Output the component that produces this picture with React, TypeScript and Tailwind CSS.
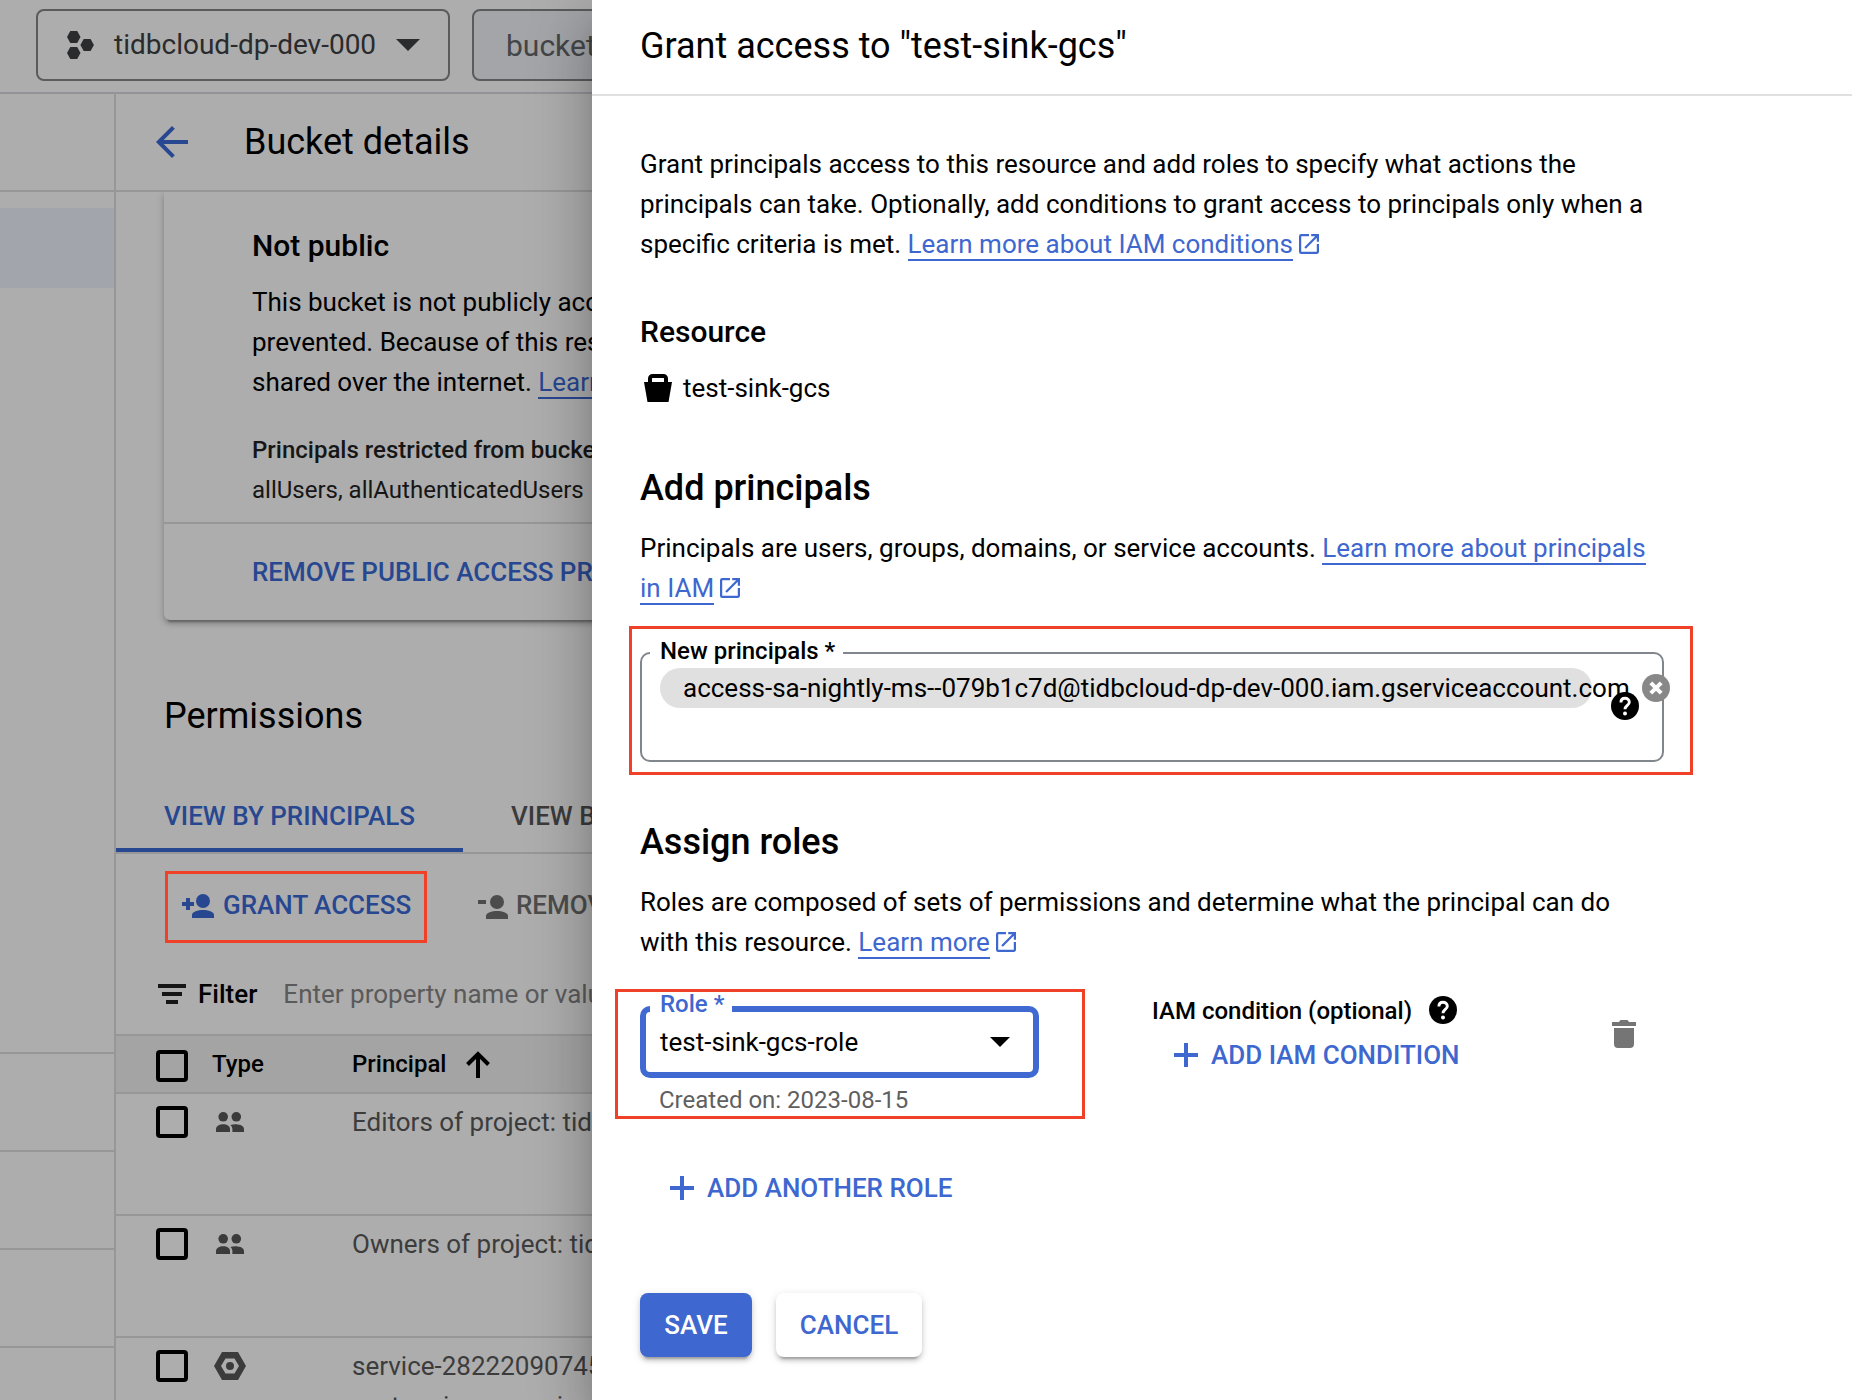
import type { ReactNode } from "react";

function ExternalIcon() {
  return (
    <svg viewBox="3 3 18 18" className="ml-[6px] inline-block size-5 align-[-1px]" fill="#3e67cf">
      <path d="M19 19H5V5h7V3H5a2 2 0 0 0-2 2v14a2 2 0 0 0 2 2h14c1.100 0 2-.9 2-2v-7h-2v7zM14 3v2h3.590l-9.830 9.830 1.410 1.410L19 6.410V10h2V3h-7z" />
    </svg>
  );
}

function DocLink({ children }: { children: ReactNode }) {
  return <span className="border-b-2 border-[#3e67cf] text-[#3e67cf]">{children}</span>;
}

function HelpIcon() {
  return (
    <svg viewBox="0 0 28 28" className="size-7 shrink-0">
      <circle cx="14" cy="14" r="14" fill="#000" />
      <path d="M9.900 10.600C9.900 7.800 11.600 6.200 14 6.200c2.400 0 4.300 1.600 4.300 4 0 3.200-4.300 3.400-4.300 7.100" fill="none" stroke="#fff" strokeWidth="2.900" />
      <circle cx="14" cy="21.600" r="2" fill="#fff" />
    </svg>
  );
}

function PlusIcon() {
  return (
    <svg viewBox="0 0 24 24" className="size-6 shrink-0">
      <path d="M12 0v24M0 12h24" stroke="#3e67cf" strokeWidth="4" />
    </svg>
  );
}

function PeopleIcon() {
  return (
    <svg viewBox="0 0 28 20" className="h-5 w-7" fill="#3b3b3b">
      <circle cx="7.200" cy="4.800" r="4.800" />
      <circle cx="20.300" cy="4.800" r="4.800" />
      <path d="M0 20v-2.800C0 14 3.500 12.300 7.200 12.300S14 14 14 17.200V20z" />
      <path d="M16.400 20v-2.800c0-1.900-.9-3.300-2-4.300 1.800-.5 3.800-.7 5.900-.6 3.900.2 7.700 1.700 7.700 4.900V20z" />
    </svg>
  );
}

function ServiceIcon() {
  return (
    <svg viewBox="0 0 32 28" className="h-7 w-8" fill="#3b3b3b">
      <path fillRule="evenodd" d="M8 0h16l8 14-8 14H8L0 14zM11.500 6.500 7 14l4.500 7.500h9L25 14l-4.500-7.500z" />
      <circle cx="16" cy="14" r="4" />
    </svg>
  );
}

function Checkbox() {
  return <span className="size-8 shrink-0 rounded-[4px] border-4 border-black" />;
}

function Hexagon({ x, y }: { x: number; y: number }) {
  return <path transform={`translate(${x} ${y})`} d="M3.300 0h6.900l3.300 6-3.300 6H3.300L0 6z" />;
}

function TopBar() {
  return (
    <div className="flex h-[94px] border-b-2 border-[#939398] pt-[9px] pl-9">
      <div className="flex h-[72px] w-[414px] shrink-0 items-center rounded-[8px] border-2 border-[#5a5b5d] pl-[29px] text-[#2a2b2d]">
        <svg viewBox="0 0 27 28" className="h-7 w-[27px]" fill="currentColor">
          <Hexagon x={0} y={0} />
          <Hexagon x={13.400} y={8} />
          <Hexagon x={0} y={16} />
        </svg>
        <span className="ml-5 text-[28px]">tidbcloud-dp-dev-000</span>
        <svg viewBox="0 0 24 12" className="ml-5 h-3 w-6" fill="currentColor">
          <path d="M0 0h24L12 12z" />
        </svg>
      </div>
      <div className="ml-[22px] flex h-[72px] w-[300px] shrink-0 items-center rounded-[8px] border-2 border-[#5a5b5d] bg-[#a3a5a8] pl-8 text-[30px] text-[#444548]">
        bucket
      </div>
    </div>
  );
}

function SideNav() {
  return (
    <div className="w-[116px] shrink-0 border-r-2 border-[#979797]">
      <div className="h-[98px] border-b-2 border-[#979797]" />
      <div className="mt-4 h-20 bg-[#a3a5ad]" />
      <div className="h-[766px] border-b-2 border-[#979797]" />
      <div className="h-[98px] border-b-2 border-[#979797]" />
      <div className="h-[98px] border-b-2 border-[#979797]" />
      <div className="h-[98px] border-b-2 border-[#979797]" />
    </div>
  );
}

const principals = [
  { kind: "people", lines: ["Editors of project: tidbcloud"] },
  { kind: "people", lines: ["Owners of project: tidbcloud"] },
  { kind: "service", lines: ["service-28222090745", "system.iam.gserviceaccount"] },
];

function BucketPage() {
  return (
    <div className="min-w-0 flex-1 overflow-hidden whitespace-nowrap">
      <div className="flex h-[98px] items-center border-b-2 border-[#979797] pl-10">
        <svg viewBox="4 4 16 16" className="size-8 shrink-0" fill="#284791">
          <path d="M20 11H7.830l5.590-5.590L12 4l-8 8 8 8 1.410-1.410L7.830 13H20v-2z" />
        </svg>
        <h1 className="ml-14 text-[36px]">Bucket details</h1>
      </div>

      <div className="overflow-hidden pb-[72px] pl-12">
        <div className="h-[428px] w-[700px] rounded-b-[6px] pt-[34px] shadow-[0_6px_2px_-4px_rgba(0,0,0,0.25),0_4px_4px_rgba(0,0,0,0.16),0_2px_10px_rgba(0,0,0,0.14)]">
          <div className="h-[296px] pl-[88px] text-[26px] leading-10">
            <h2 className="text-[30px] leading-10 font-medium">Not public</h2>
            <p className="mt-4">
              This bucket is not publicly accessible
              <br />
              prevented. Because of this restriction
              <br />
              shared over the internet.{" "}
              <span className="border-b-2 border-[#284791] text-[#284791]">Learn more</span>
            </p>
            <p className="mt-7 text-[24px] leading-10 text-[#161616]">
              <span className="font-medium">Principals restricted from bucket access</span>
              <br />
              allUsers, allAuthenticatedUsers
            </p>
          </div>
          <div className="border-t-2 border-[#979797] pt-7 pl-[88px] text-[26px] leading-10 font-medium text-[#284791]">
            REMOVE PUBLIC ACCESS PREVENTION
          </div>
        </div>
      </div>

      <h2 className="pl-12 text-[36px] leading-[48px]">Permissions</h2>

      <div className="mt-11 flex border-b-2 border-[#979797] pb-0.5 text-[26px] leading-10 font-medium">
        <div className="-mb-0.5 h-[68px] w-[347px] shrink-0 border-b-4 border-[#284791] pt-3 pl-12 text-[#284791]">
          VIEW BY PRINCIPALS
        </div>
        <div className="-mb-0.5 h-[68px] shrink-0 pt-3 pl-12 text-[#3b3b3b]">VIEW BY ROLES</div>
      </div>

      <div className="flex pt-[17px] pl-[49px] text-[26px] font-medium">
        <div className="flex h-[72px] w-[262px] shrink-0 items-center border-3 border-[#ee4128] pb-[3px] pl-[14px] text-[#284791]">
          <svg viewBox="0 0 32 24" className="h-6 w-8 shrink-0" fill="currentColor">
            <path d="M4 4h4v4h4v4H8v4H4v-4H0V8h4z" />
            <circle cx="21" cy="7" r="7" />
            <path d="M10 24v-3c0-3.200 6-5 11-5s11 1.800 11 5v3z" />
          </svg>
          <span className="ml-[9px]">GRANT ACCESS</span>
        </div>
        <div className="ml-[51px] flex h-[72px] shrink-0 items-center text-[#4c4c4c]">
          <svg viewBox="0 0 30 24" className="h-6 w-[30px] shrink-0" fill="currentColor">
            <path d="M0 5h8v4H0z" />
            <circle cx="19" cy="7" r="7" />
            <path d="M8 24v-3c0-3.200 6-5 11-5s11 1.800 11 5v3z" />
          </svg>
          <span className="ml-2 pb-[3px]">REMOVE ACCESS</span>
        </div>
      </div>

      <div className="flex h-[91px] items-center pl-[42px] text-[26px] leading-10">
        <svg viewBox="0 0 28 20" className="mt-[10px] h-5 w-7 shrink-0" fill="#161616">
          <path d="M0 0h28v4H0zM4 8h20v4H4zM8 16h12v4H8z" />
        </svg>
        <span className="mt-[11px] ml-3 font-medium">Filter</span>
        <span className="mt-[11px] ml-[26px] text-[#5a5a5a]">Enter property name or value</span>
      </div>

      <div className="flex h-[60px] items-center border-y-2 border-[#979797] bg-[#a4a4a4] pl-10 text-[24px] font-medium">
        <span className="flex w-14 shrink-0 pt-1">
          <Checkbox />
        </span>
        <span className="w-[140px] shrink-0">Type</span>
        <span>Principal</span>
        <svg viewBox="0 0 24 27" className="ml-5 h-[27px] w-6 shrink-0" fill="none" stroke="#000" strokeWidth="4">
          <path d="M12 27V3M1.500 13.500 12 3l10.500 10.500" />
        </svg>
      </div>

      {principals.map((p) => (
        <div key={p.lines[0]} className="flex h-[122px] border-b-2 border-[#979797] pt-2 pl-10 text-[26px] leading-10 text-[#3c3c3c]">
          <span className="flex w-[58px] shrink-0 pt-1">
            <Checkbox />
          </span>
          <span className="w-[138px] shrink-0">
            {p.kind === "people" ? (
              <span className="flex pt-[10px] pl-[2px]">
                <PeopleIcon />
              </span>
            ) : (
              <span className="flex pt-[6px]">
                <ServiceIcon />
              </span>
            )}
          </span>
          <span className="shrink-0">
            {p.lines.map((line) => (
              <span key={line} className="block">
                {line}
              </span>
            ))}
          </span>
        </div>
      ))}
    </div>
  );
}

function PrincipalsField() {
  return (
    <div className="relative mt-11 h-[110px] w-[1024px] rounded-[10px] border-2 border-[#80868b]">
      <div className="absolute -top-[28px] -left-[13px] h-[149px] w-[1064px] border-3 border-[#ee4128]" />
      <span className="absolute -top-[19px] left-2 h-8 w-[193px] bg-white pl-[10px] text-[24px] leading-8 font-medium">
        New principals *
      </span>
      <div className="mt-[14px] ml-[18px] flex h-10 w-[932px] items-center rounded-full bg-[#e0e0e0] pl-[23px] text-[26px] whitespace-nowrap">
        <span>access-sa-nightly-ms--079b1c7d@tidbcloud-dp-dev-000.iam.gserviceaccount.com</span>
      </div>
      <svg viewBox="0 0 28 28" className="absolute top-5 left-[1000px] size-7">
        <circle cx="14" cy="14" r="14" fill="#888" />
        <path d="m8.800 8.800 10.400 10.400M19.200 8.800 8.800 19.200" stroke="#fff" strokeWidth="4" />
      </svg>
      <span className="absolute top-[38px] left-[969px]">
        <HelpIcon />
      </span>
    </div>
  );
}

function RoleRow() {
  return (
    <div className="flex items-start pt-11">
      <div className="relative w-[399px]">
        <div className="absolute -top-[17px] -left-[25px] h-[130px] w-[470px] border-3 border-[#ee4128]" />
        <div className="relative flex h-[72px] items-center justify-between rounded-[10px] border-6 border-[#4069d1] pr-[23px] pl-[14px] text-[26px]">
          <span className="absolute -top-[14px] left-1 h-4 w-[82px] bg-white" />
          <span className="absolute -top-[24px] left-[14px] text-[24px] leading-8 font-medium text-[#3e67cf]">Role *</span>
          <span>test-sink-gcs-role</span>
          <svg viewBox="0 0 20 10" className="h-[10px] w-5">
            <path d="M0 0h20L10 10z" />
          </svg>
        </div>
        <p className="mt-[6px] pl-[19px] text-[24px] leading-8 text-[#5f5f5f]">Created on: 2023-08-15</p>
      </div>
      <div className="ml-[113px] -mt-[15px] w-[460px]">
        <div className="flex h-10 items-center">
          <span className="text-[24px] font-medium">IAM condition (optional)</span>
          <span className="mt-[-2px] ml-[17px]">
            <HelpIcon />
          </span>
        </div>
        <div className="mt-1 flex h-10 items-center pl-[22px] text-[26px] font-medium text-[#3e67cf]">
          <PlusIcon />
          <span className="ml-[13px]">ADD IAM CONDITION</span>
        </div>
      </div>
      <svg viewBox="0 0 24 28" className="mt-[14px] h-7 w-6" fill="#757575">
        <path d="M7 2 8.500 0h7L17 2h7v4H0V2zM2 8h20v16a4 4 0 0 1-4 4H6a4 4 0 0 1-4-4z" />
      </svg>
    </div>
  );
}

function GrantAccessDrawer() {
  return (
    <div className="absolute inset-y-0 right-0 w-[1260px] bg-white shadow-[0_16px_20px_-10px_rgba(0,0,0,0.2),0_32px_48px_4px_rgba(0,0,0,0.14),0_12px_60px_10px_rgba(0,0,0,0.12)]">
      <div className="flex h-24 items-center border-b-2 border-[#e0e0e0] pb-[2px] pl-12 text-[36px]">
        Grant access to "test-sink-gcs"
      </div>
      <div className="pt-12 pl-12 text-[26px] leading-10">
        <p>
          Grant principals access to this resource and add roles to specify what actions the
          <br />
          principals can take. Optionally, add conditions to grant access to principals only when a
          <br />
          specific criteria is met. <DocLink>Learn more about IAM conditions</DocLink>
          <ExternalIcon />
        </p>

        <h3 className="mt-12 text-[30px] leading-10 font-medium">Resource</h3>
        <div className="mt-4 flex h-10 items-center pl-1">
          <svg viewBox="0 0 28 28" className="size-7">
            <path d="M6 9V4.500A2.500 2.500 0 0 1 8.500 2h11A2.500 2.500 0 0 1 22 4.500V9" fill="none" stroke="#000" strokeWidth="4" />
            <path d="M0 8h28l-3.500 20h-21z" />
          </svg>
          <span className="ml-[11px]">test-sink-gcs</span>
        </div>

        <h2 className="mt-14 text-[36px] leading-[48px] font-medium">Add principals</h2>
        <p className="mt-4">
          Principals are users, groups, domains, or service accounts. <DocLink>Learn more about principals</DocLink>
          <br />
          <DocLink>in IAM</DocLink>
          <ExternalIcon />
        </p>
        <PrincipalsField />

        <h2 className="mt-14 text-[36px] leading-[48px] font-medium">Assign roles</h2>
        <p className="mt-4">
          Roles are composed of sets of permissions and determine what the principal can do
          <br />
          with this resource. <DocLink>Learn more</DocLink>
          <ExternalIcon />
        </p>
        <RoleRow />

        <div className="mt-[52px] flex h-10 items-center pl-[30px] font-medium text-[#3e67cf]">
          <PlusIcon />
          <span className="ml-[13px]">ADD ANOTHER ROLE</span>
        </div>

        <div className="mt-[85px] flex gap-6 font-medium">
          <button className="h-16 w-28 rounded-[8px] bg-[#3e67cf] text-white shadow-[0_6px_2px_-4px_rgba(0,0,0,0.2),0_4px_4px_rgba(0,0,0,0.14),0_2px_10px_rgba(0,0,0,0.12)]">
            SAVE
          </button>
          <button className="h-16 w-[146px] rounded-[8px] bg-white text-[#3e67cf] shadow-[0_6px_2px_-4px_rgba(0,0,0,0.2),0_4px_4px_rgba(0,0,0,0.14),0_2px_10px_rgba(0,0,0,0.12)]">
            CANCEL
          </button>
        </div>
      </div>
    </div>
  );
}

export default function App() {
  return (
    <div className="relative h-[1400px] w-[1852px] overflow-hidden bg-[#adadad] font-['Roboto',sans-serif] text-black">
      <div className="h-full w-[592px] overflow-hidden">
        <TopBar />
        <div className="flex">
          <SideNav />
          <BucketPage />
        </div>
      </div>
      <GrantAccessDrawer />
    </div>
  );
}
